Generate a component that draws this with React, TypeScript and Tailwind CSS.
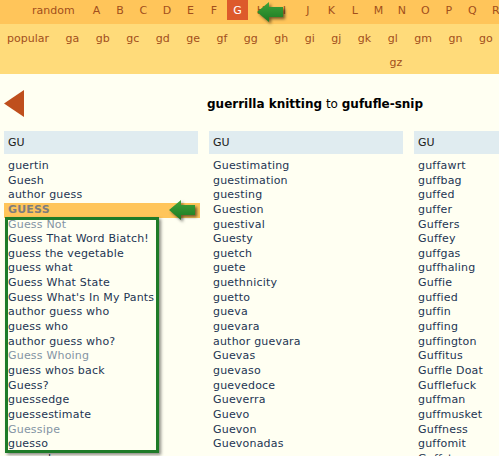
import React from "react";

const letters = ["A", "B", "C", "D", "E", "F", "G", "H", "I", "J", "K", "L", "M", "N", "O", "P", "Q", "R", "S", "T", "U", "V", "W", "X", "Y", "Z"];
const subs = ["ga", "gb", "gc", "gd", "ge", "gf", "gg", "gh", "gi", "gj", "gk", "gl", "gm", "gn", "go", "gp", "gq", "gr", "gs", "gt", "gu", "gv", "gw", "gx", "gy"];

type Item = { t: string; dim?: boolean; hot?: boolean };

const col1: Item[] = [
  { t: "guertin" },
  { t: "Guesh" },
  { t: "author guess" },
  { t: "GUESS", hot: true },
  { t: "Guess Not", dim: true },
  { t: "Guess That Word Biatch!" },
  { t: "guess the vegetable" },
  { t: "guess what" },
  { t: "Guess What State" },
  { t: "Guess What's In My Pants" },
  { t: "author guess who" },
  { t: "guess who" },
  { t: "author guess who?" },
  { t: "Guess Whoing", dim: true },
  { t: "guess whos back" },
  { t: "Guess?" },
  { t: "guessedge" },
  { t: "guessestimate" },
  { t: "Guessipe", dim: true },
  { t: "guesso" },
  { t: "guessology" },
];

const col2: Item[] = [
  "Guestimating", "guestimation", "guesting", "Guestion", "guestival", "Guesty", "guetch", "guete",
  "guethnicity", "guetto", "gueva", "guevara", "author guevara", "Guevas", "guevaso", "guevedoce",
  "Gueverra", "Guevo", "Guevon", "Guevonadas",
].map((t) => ({ t }));

const col3: Item[] = [
  "guffawrt", "guffbag", "guffed", "guffer", "Guffers", "Guffey", "guffgas", "guffhaling", "Guffie",
  "guffied", "guffin", "guffing", "guffington", "Guffitus", "Guffle Doat", "Gufflefuck", "guffman",
  "guffmusket", "Guffness", "guffomit", "Guffster",
].map((t) => ({ t }));

const GreenArrow = ({ className }: { className: string }) => (
  <svg
    className={className}
    width="30"
    height="22"
    viewBox="0 0 30 22"
    style={{ filter: "drop-shadow(2px 2px 1.5px rgba(0,0,0,0.55))" }}
  >
    <defs>
      <linearGradient id="ga" x1="0" y1="0" x2="0" y2="1">
        <stop offset="0" stopColor="#3fa33a" />
        <stop offset="1" stopColor="#1c7a22" />
      </linearGradient>
    </defs>
    <polygon points="1,10 13,0 13,5 27,5 27,15 13,15 13,20" fill="url(#ga)" />
  </svg>
);

const Column = ({ items }: { items: Item[] }) => (
  <div className="w-[194px] shrink-0">
    <div className="h-[23px] bg-[#e0ecf0] pl-[4px] text-[11px] leading-[23px] text-[#1a1a1a]">GU</div>
    <ul className="mt-[5px] tracking-[0.2px]">
      {items.map((it) => (
        <li
          key={it.t}
          className={
            it.hot
              ? "h-[14.65px] w-[196px] bg-[#ffc55a] pl-[4px] text-[11px] font-bold leading-[14.65px] text-[#7d7d7d]"
              : it.dim
              ? "h-[14.65px] pl-[4px] text-[11px] leading-[14.65px] text-[#8494a4]"
              : "h-[14.65px] pl-[4px] text-[11px] leading-[14.65px] text-[#1d3553]"
          }
        >
          {it.t}
        </li>
      ))}
    </ul>
  </div>
);

export default function App() {
  return (
    <div className="relative h-[456px] w-[499px] overflow-hidden bg-[#fffff2] font-['DejaVu_Sans',Verdana,sans-serif]">
      <div className="w-[800px]">
        {/* letter bar */}
        <div className="flex h-[24px] items-start bg-[#ffc55a] text-[11px] text-[#a24f1c]">
          <span className="pl-[32px] pr-[10px] leading-[22px]">random</span>
          {letters.map((l) =>
            l === "G" ? (
              <span key={l} className="mx-[1.25px] h-[20px] w-[21px] bg-[#dd5a2b] text-center leading-[22px] text-white">
                {l}
              </span>
            ) : (
              <span key={l} className="w-[23.5px] text-center leading-[22px]">
                {l}
              </span>
            )
          )}
        </div>

        {/* sub bar */}
        <div className="h-[50px] bg-[#ffdb7a] pt-[3px] text-[11px] leading-[24px] text-[#a24f1c]">
          <div className="flex gap-[16.5px] pl-[7px]">
            <span>popular</span>
            {subs.map((s) => (
              <span key={s}>{s}</span>
            ))}
          </div>
          <div className="flex w-[792px] justify-center">
            <span>gz</span>
          </div>
        </div>

        {/* title row */}
        <div className="flex h-[57px] items-center pt-[2px]">
          <svg className="ml-[4px]" width="20" height="27" viewBox="0 0 20 27">
            <polygon points="0,13.5 20,0 20,27" fill="#bf4f1d" />
          </svg>
          <div className="ml-[183px] text-[12px] text-black">
            <span className="font-bold">guerrilla knitting</span> to <span className="font-bold">gufufle-snip</span>
          </div>
        </div>

        {/* columns */}
        <div className="flex gap-[11px] pl-[4px]">
          <Column items={col1} />
          <Column items={col2} />
          <Column items={col3} />
        </div>
      </div>

      {/* annotations */}
      <div className="absolute left-[5px] top-[217px] h-[236px] w-[154px] border-[3px] border-[#1e7b28] shadow-[2px_2px_3px_rgba(0,0,0,0.45)]" />
      <GreenArrow className="absolute left-[256px] top-[2px]" />
      <GreenArrow className="absolute left-[168px] top-[200px]" />
    </div>
  );
}
